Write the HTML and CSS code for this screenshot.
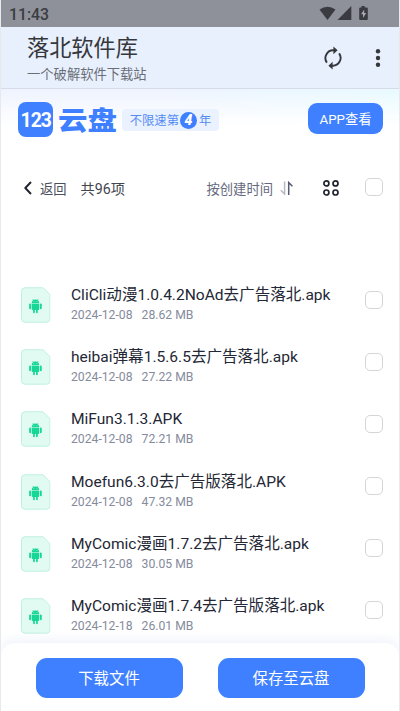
FILE: index.html
```html
<!DOCTYPE html>
<html lang="zh-CN">
<head>
<meta charset="utf-8">
<title>落北软件库</title>
<link rel="stylesheet" href="styles.css">
</head>
<body>
<svg width="0" height="0" class="defs" aria-hidden="true">
  <symbol id="apk" viewBox="0 0 30 36">
    <path d="M4 .5H22.5L29.5 7.5V32Q29.5 35.5 26 35.5H4Q.5 35.5 .5 32V4Q.5 .5 4 .5Z" fill="#e2fbf2" stroke="#bdf0dc"/>
    <g fill="#17d797">
      <path d="M10.9 16.1a3.8 3.8 0 0 1 7.6 0Z"/>
      <path d="M12 12l1.2 1.7M17.4 12l-1.2 1.7" stroke="#17d797" stroke-width=".7"/>
      <path d="M10.9 16.7h7.6v5.6q0 .8-.8.8h-.6v2.3q0 .9-.9.9t-.9-.9v-2.3h-1.2v2.3q0 .9-.9.9t-.9-.9v-2.3h-.6q-.8 0-.8-.8Z"/>
      <rect x="8.3" y="16.6" width="1.9" height="5.6" rx=".9"/>
      <rect x="19.2" y="16.6" width="1.9" height="5.6" rx=".9"/>
    </g>
    <circle cx="13.1" cy="14.6" r=".45" fill="#fff"/><circle cx="16.3" cy="14.6" r=".45" fill="#fff"/>
  </symbol>
</svg>
<div class="screen">
  <div class="status">
    <span class="clock">11:43</span>
    <svg class="signals" width="52" height="16" viewBox="0 0 52 16" fill="#393b40">
      <path d="M.5 3.6Q8.5-2 16.5 3.6L8.5 14Z"/>
      <path d="M32.3 0V14H18.5Z"/>
      <path d="M42.5 0h3.2v1.4h2.1q1 0 1 1V13q0 1-1 1h-6.6q-1 0-1-1V2.4q0-1 1-1h1.3Z"/>
      <path d="M45.2 3.6L42 8.3h2v3.7l3.2-4.9h-2Z" fill="#a6a9b0"/>
    </svg>
  </div>
  <header class="appbar">
    <div class="titles">
      <h1>落北软件库</h1>
      <p>一个破解软件下载站</p>
    </div>
    <svg class="refresh" width="20" height="24" viewBox="0 0 20 24" fill="none" stroke="#35373b" stroke-width="1.9">
      <path d="M3.9 16.6A7.8 7.8 0 0 1 11 4.3M16.1 7.4A7.8 7.8 0 0 1 9 19.7"/>
      <path d="M10.4 .4V8.2l4.2-3.9ZM9.6 15.8v7.8l-4.2-3.9Z" fill="#35373b" stroke="none"/>
    </svg>
    <svg class="more" width="6" height="20" viewBox="0 0 6 20" fill="#35373b"><circle cx="3" cy="3.2" r="2.2"/><circle cx="3" cy="10" r="2.2"/><circle cx="3" cy="16.8" r="2.2"/></svg>
  </header>
  <section class="brand">
    <div class="logo"><span>123</span></div>
    <div class="wordmark">云盘</div>
    <div class="promo"><span>不限速第</span><b>4</b><span>年</span></div>
    <button class="open-app">APP查看</button>
  </section>
  <section class="toolbar">
    <svg width="8" height="14" viewBox="0 0 8 14" fill="none" stroke="#20242f" stroke-width="1.9" stroke-linejoin="round"><path d="M7 1L1.3 7L7 13"/></svg>
    <span class="back">返回</span>
    <span class="count">共96项</span>
    <span class="sort">按创建时间</span>
    <svg class="sort-icon" width="14" height="14" viewBox="0 0 14 14" fill="none" stroke-width="1.5"><path d="M4.6 .5V13L.8 9.3" stroke="#b5b9c3"/><path d="M8.7 14V1.5L12.4 5.2" stroke="#555b70"/></svg>
    <svg class="grid-icon" width="16" height="16" viewBox="0 0 16 16" fill="none" stroke="#20242f" stroke-width="1.7"><circle cx="3.4" cy="3.4" r="2.5"/><circle cx="12.5" cy="3.4" r="2.5"/><circle cx="3.4" cy="12.5" r="2.5"/><circle cx="12.5" cy="12.5" r="2.5"/></svg>
    <i class="check"></i>
  </section>
  <ul class="files">
    <li><svg class="apk"><use href="#apk"/></svg><div class="info"><div class="name">CliCli动漫1.0.4.2NoAd去广告落北.apk</div><div class="meta"><span>2024-12-08</span><span>28.62 MB</span></div></div><i class="check"></i></li>
    <li><svg class="apk"><use href="#apk"/></svg><div class="info"><div class="name">heibai弹幕1.5.6.5去广告落北.apk</div><div class="meta"><span>2024-12-08</span><span>27.22 MB</span></div></div><i class="check"></i></li>
    <li><svg class="apk"><use href="#apk"/></svg><div class="info"><div class="name">MiFun3.1.3.APK</div><div class="meta"><span>2024-12-08</span><span>72.21 MB</span></div></div><i class="check"></i></li>
    <li><svg class="apk"><use href="#apk"/></svg><div class="info"><div class="name">Moefun6.3.0去广告版落北.APK</div><div class="meta"><span>2024-12-08</span><span>47.32 MB</span></div></div><i class="check"></i></li>
    <li><svg class="apk"><use href="#apk"/></svg><div class="info"><div class="name">MyComic漫画1.7.2去广告落北.apk</div><div class="meta"><span>2024-12-08</span><span>30.05 MB</span></div></div><i class="check"></i></li>
    <li><svg class="apk"><use href="#apk"/></svg><div class="info"><div class="name">MyComic漫画1.7.4去广告版落北.apk</div><div class="meta"><span>2024-12-18</span><span>26.01 MB</span></div></div><i class="check"></i></li>
  </ul>
  <footer class="actions">
    <button>下载文件</button>
    <button>保存至云盘</button>
  </footer>
</div>
</body>
</html>
```

FILE: styles.css
```css
* { box-sizing: border-box; margin: 0; padding: 0; }
body { font-family: Roboto, "Noto Sans CJK SC", sans-serif; background: #fff; }
.defs { display: block; position: absolute; }
svg { display: block; flex: none; }
button { border: 0; background: #3e80ff; color: #fff; font-family: inherit; white-space: nowrap; }
.screen { width: 400px; height: 711px; overflow: hidden; display: flex; flex-direction: column; border-left: 1px solid #e8e9ec; border-right: 1px solid #e8e9ec; }

.status { height: 27px; flex: none; background: #8e9199; display: flex; align-items: flex-start; justify-content: space-between; padding: 6px 28px 0 8px; color: #3b3d42; }
.clock { font-size: 15.8px; line-height: 17px; font-weight: 500; }

.appbar { height: 62px; flex: none; background: #e8f0fe; display: flex; padding-left: 26px; color: #35373b; border-bottom: 1px solid #d5dce8; }
.titles { width: 296px; flex: none; }
.titles h1 { font-size: 22.2px; line-height: 30px; font-weight: 400; margin-top: 6px; }
.titles p { font-size: 13.3px; line-height: 18px; color: #686d76; margin-top: 3px; }
.refresh { margin-top: 19px; }
.more { margin: 21px 0 0 32px; }

.brand { height: 75px; flex: none; display: flex; padding: 13px 16px 0 17px; background: linear-gradient(90deg, #f0f3ff, #e8fbff); background: linear-gradient(#fff0, #fff 36px), linear-gradient(90deg, #eef3ff 40%, #e8faff); }
.logo { width: 35px; height: 35px; border-radius: 8px; background: #3e80ff; color: #fff; display: flex; align-items: center; justify-content: center; }
.logo span { font: 700 20px/20px Roboto, sans-serif; letter-spacing: -1px; margin-right: -1px; transform: scale(.97, 1.02); }
.wordmark { margin-left: 5px; width: 59px; font-size: 29.5px; line-height: 36px; font-weight: 800; color: #3e80ff; white-space: nowrap; transform: scaleY(.88); }
.promo { margin: 7px 0 0 5px; width: 97px; height: 22px; border-radius: 4px; background: #eaf2ff; color: #548bf2; font-size: 12.3px; display: flex; align-items: center; justify-content: center; white-space: nowrap; }
.promo b { width: 17px; height: 17px; border-radius: 50%; background: #3e80ff; color: #fff; font: italic 900 14px/17px Roboto, sans-serif; text-align: center; margin: 0 2px 0 1px; }
.open-app { margin-left: auto; width: 75px; height: 31px; border-radius: 9px; font-size: 13.3px; margin-top: 1px; }

.toolbar { height: 48px; flex: none; display: flex; align-items: center; padding: 0 16px 0 23px; white-space: nowrap; }
.back { font-size: 13.3px; margin-left: 8px; color: #4a4e5d; }
.count { font-size: 14.2px; margin-left: 14px; color: #42454e; margin-top: -1px; }
.sort { font-size: 13.3px; margin-left: auto; color: #656980; }
.sort-icon { margin-left: 7px; }
.grid-icon { margin-left: 29px; }
.check { display: block; flex: none; width: 18px; height: 18px; border: 1px solid #d3d5d9; border-radius: 5px; background: #fff; }
.toolbar .check { margin-left: 26px; margin-top: -2px; }

.files { list-style: none; padding: 75px 16px 0 20px; height: 431px; flex: none; overflow: hidden; }
.files li { display: flex; height: 62.2px; }
.apk { width: 29.5px; height: 36px; }
.info { margin: -3px 0 0 20.5px; flex: 1; white-space: nowrap; }
.name { font-size: 15.55px; line-height: 22px; color: #242735; }
.meta { font-size: 12.2px; line-height: 18px; color: #858b9c; display: flex; gap: 9px; }
.files .check { margin-top: 3.5px; }

.actions { height: 68px; flex: none; position: relative; background: #fff; border-radius: 14px 14px 0 0; box-shadow: 0 -4px 10px #e8edfa99; display: flex; gap: 35px; padding: 15px 34.5px 0; }
.actions button { width: 147px; height: 40px; border-radius: 11px; font-size: 15.4px; padding-bottom: 2px; }
```
